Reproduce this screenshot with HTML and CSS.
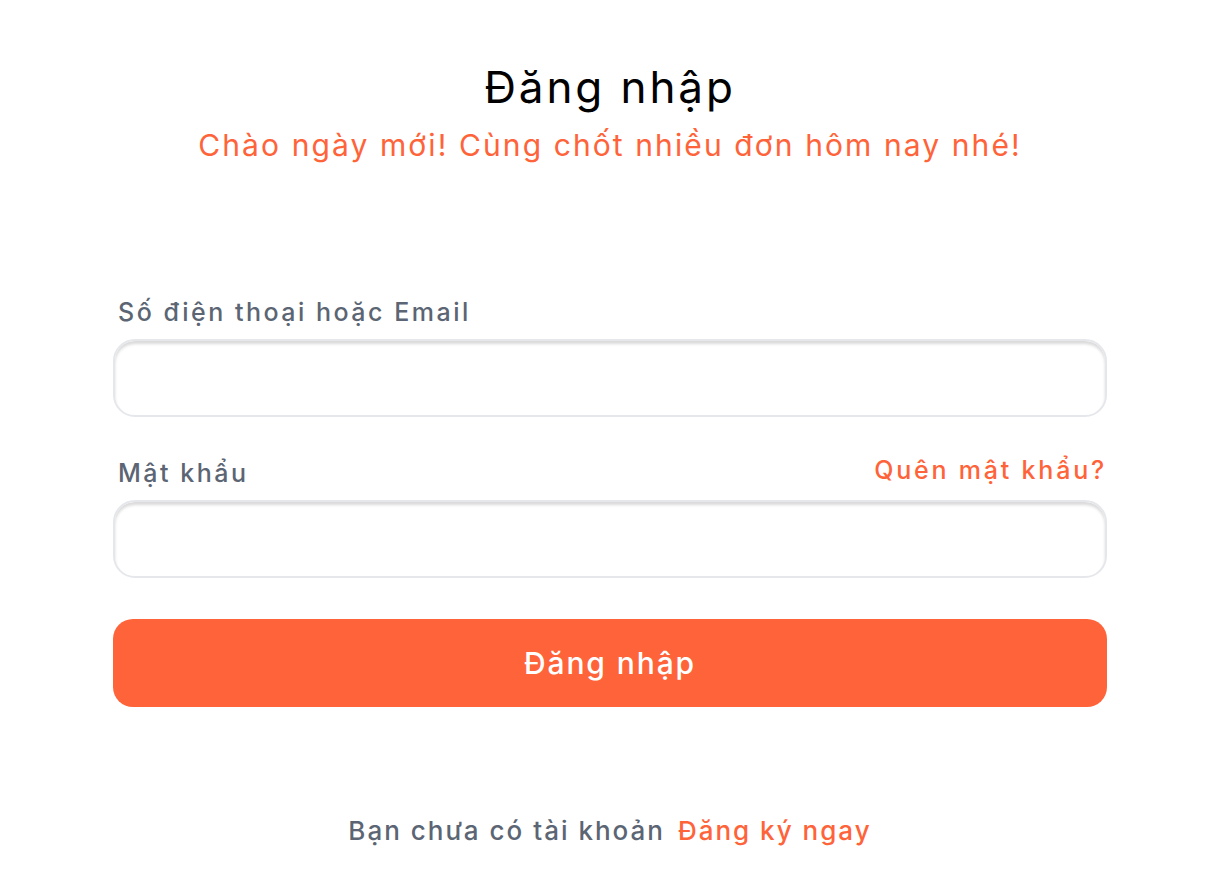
FILE: index.html
```html
<!DOCTYPE html>
<html lang="vi">
<head>
    <meta charset="UTF-8">
    <meta name="viewport" content="width=device-width, initial-scale=1.0">
    <title>Đăng nhập</title>
    <link rel="stylesheet" href="styles.css">
</head>
<body>
    <main class="login">
        <header class="login-head">
            <h1 class="title">Đăng nhập</h1>
            <p class="subtitle">Chào ngày mới! Cùng chốt nhiều đơn hôm nay nhé!</p>
        </header>
        <form class="login-form">
            <div class="field">
                <div class="field-top">
                    <label class="label" for="user">Số điện thoại hoặc Email</label>
                </div>
                <input class="input" id="user" type="text">
            </div>
            <div class="field">
                <div class="field-top">
                    <label class="label" for="pass">Mật khẩu</label>
                    <a href="#" class="forgot">Quên mật khẩu?</a>
                </div>
                <input class="input" id="pass" type="password">
            </div>
            <button type="button" class="btn">Đăng nhập</button>
        </form>
        <p class="signup">Bạn chưa có tài khoản <a href="#">Đăng ký ngay</a></p>
    </main>
</body>
</html>
```

FILE: styles.css
```css
body {
    margin: 0;
    background: #fff;
    font-family: Inter, "Open Sans", sans-serif;
}
.login {
    width: 994px;
    margin: 0 auto;
    padding-top: 59px;
}
.login-head {
    text-align: center;
}
.title {
    margin: 0;
    font-size: 44px;
    font-weight: 400;
    color: #000;
    line-height: 56px;
    letter-spacing: 2.9px;
}
.subtitle {
    margin: 10px 0 0;
    font-size: 30px;
    color: #ff6339;
    line-height: 40px;
    letter-spacing: 2.1px;
}
.login-form {
    margin-top: 132px;
}
.field {
    margin-bottom: 41px;
}
.field-top {
    display: flex;
    justify-content: space-between;
    align-items: center;
    height: 30px;
    padding: 0 0 0 5px;
    margin-bottom: 12px;
}
.label {
    font-size: 25px;
    color: #5b6573;
    font-weight: 500;
    letter-spacing: 2.5px;
}
.forgot {
    font-size: 25px;
    color: #ff6339;
    text-decoration: none;
    font-weight: 500;
    letter-spacing: 2.8px;
    margin-bottom: 6px;
}
.input {
    display: block;
    box-sizing: border-box;
    width: 100%;
    height: 78px;
    border: 2px solid #e5e7eb;
    border-radius: 22px;
    box-shadow: inset 0 3px 3px rgba(0, 0, 0, 0.15);
    background: #fff;
    outline: none;
}
.btn {
    display: block;
    width: 100%;
    height: 88px;
    border: none;
    border-radius: 20px;
    background: #ff6339;
    color: #fff;
    font-family: inherit;
    font-size: 30px;
    font-weight: 500;
    letter-spacing: 1.9px;
    cursor: pointer;
}
.signup {
    margin: 106px 0 0;
    line-height: 36px;
    text-align: center;
    font-size: 26px;
    font-weight: 500;
    color: #5b6573;
    letter-spacing: 2px;
}
.signup a {
    color: #ff6339;
    text-decoration: none;
    margin-left: 4px;
}
```
